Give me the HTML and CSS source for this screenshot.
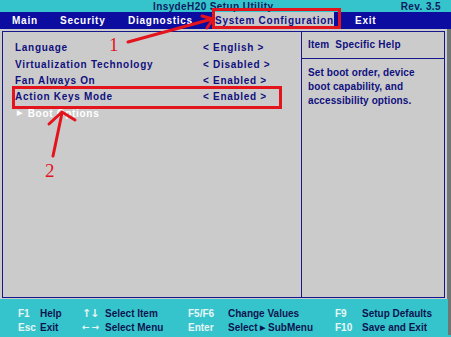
FILE: index.html
```html
<!DOCTYPE html>
<html lang="en">
<head>
    <meta charset="UTF-8">
    <meta name="viewport" content="width=device-width, initial-scale=1.0">
    <title>InsydeH20 Setup Utility</title>
    <link rel="stylesheet" href="styles.css">
</head>
<body>
    <div class="screen">
        <div class="titlebar">
            <span class="title">InsydeH20 Setup Utility</span>
            <span class="rev">Rev. 3.5</span>
        </div>
        <div class="menu">
            <span class="tab">Main</span>
            <span class="tab">Security</span>
            <span class="tab">Diagnostics</span>
            <span class="tab"><span class="selected">System Configuration</span></span>
            <span class="tab">Exit</span>
        </div>
        <div class="main">
            <div class="frame">
                <div class="items">
                    <div class="row r1"><span class="label">Language</span><span class="value">&lt; English &gt;</span></div>
                    <div class="row r2"><span class="label">Virtualization Technology</span><span class="value">&lt; Disabled &gt;</span></div>
                    <div class="row r3"><span class="label">Fan Always On</span><span class="value">&lt; Enabled &gt;</span></div>
                    <div class="row r4"><span class="label">Action Keys Mode</span><span class="value">&lt; Enabled &gt;</span></div>
                    <div class="row submenu"><span class="tri">&#9654;</span>Boot Options</div>
                </div>
                <div class="help">
                    <div class="help-head">Item&nbsp; Specific Help</div>
                    <div class="help-text">Set boot order, device<br>boot capability, and<br>accessibility options.</div>
                </div>
            </div>
        </div>
        <div class="footer">
            <span class="key">F1</span><span class="desc">Help</span>
            <span class="key arrow">&uarr;&darr;</span><span class="desc">Select Item</span>
            <span class="key">F5/F6</span><span class="desc">Change Values</span>
            <span class="key">F9</span><span class="desc">Setup Defaults</span>
            <span class="key">Esc</span><span class="desc">Exit</span>
            <span class="key arrow-h">&larr;&rarr;</span><span class="desc">Select Menu</span>
            <span class="key">Enter</span><span class="desc">Select <span class="small-tri">&#9654;</span> SubMenu</span>
            <span class="key">F10</span><span class="desc">Save and Exit</span>
        </div>

        <!-- annotations drawn on top of the screenshot -->
        <div class="mark mark-tab"></div>
        <div class="mark mark-row"></div>
        <span class="num num-1">1</span>
        <span class="num num-2">2</span>
        <svg class="arrows" width="451" height="337" viewBox="0 0 451 337">
            <g fill="none" stroke="#e4141c" stroke-width="3" stroke-linecap="round">
                <path d="M128 42 L212 19"/>
                <path d="M202 16 L213 19 L207 28"/>
                <path d="M53 156 L62 113"/>
                <path d="M49 124 L62 112 L75 120"/>
            </g>
        </svg>
    </div>
</body>
</html>
```

FILE: styles.css
```css
body { margin: 0; background: #ffffff; }
.screen { position: relative; width: 451px; height: 337px; overflow: hidden; background: #36c4cc; font-family: "Liberation Sans", Arial, sans-serif; font-weight: bold; }

.titlebar { height: 12px; display: flex; align-items: flex-end; color: #0c1a60; font-size: 10px; line-height: 10px; }
.title { margin-left: 153px; letter-spacing: 0.4px; }
.rev { margin-left: auto; margin-right: 10px; letter-spacing: 0.4px; }

.menu { height: 17px; background: #0c0ca0; display: grid; grid-template-columns: 48px 68px 87px 140px auto; padding-left: 12px; align-items: center; color: #ffffff; font-size: 10px; letter-spacing: 0.75px; }
.tab { white-space: nowrap; }
.tab .selected { display: block; width: 119px; margin-left: -3px; padding-left: 3px; line-height: 17px; background: #c8c8c8; color: #10108a; }

.main { height: 270px; background: #cbcbcb; padding: 2px 2px 1px 2px; box-sizing: border-box; border-right: 4px solid #6f7674; }
.frame { height: 100%; border: 1px solid #16168e; display: flex; box-sizing: border-box; }
.items { width: 298px; padding: 8px 0 0 12px; box-sizing: border-box; color: #10107e; font-size: 10px; letter-spacing: 0.7px; }
.row { height: 16px; display: flex; align-items: center; white-space: nowrap; }
.r1 { height: 15px; }
.r2 { height: 18px; }
.r3 { height: 15px; }
.r4 { height: 17px; }
.label { width: 188px; }
.submenu { color: #ffffff; }
.tri { font-size: 7px; margin-left: 2px; margin-right: 5px; }

.help { flex: 1; border-left: 1px solid #16168e; color: #10107e; font-size: 10px; }
.help-head { height: 26px; border-bottom: 1px solid #16168e; padding-left: 6px; line-height: 26px; letter-spacing: 0.2px; }
.help-text { padding: 7px 0 0 6px; line-height: 14px; letter-spacing: 0.1px; }

.footer { display: grid; grid-template-columns: 22px 42px 23px 83px 40px 107px 27px auto; grid-auto-rows: 14px; padding: 7px 0 0 18px; align-items: center; font-size: 10px; white-space: nowrap; border-right: 3px solid #6f7674; height: 36px; box-sizing: border-box; }
.key { color: #e6f6f6; }
.key.arrow { font-family: "DejaVu Sans", sans-serif; font-size: 11px; letter-spacing: -1px; }
.key.arrow-h { font-family: "DejaVu Sans", sans-serif; font-size: 9px; letter-spacing: 2px; }
.desc { color: #0c1450; }
.small-tri { font-size: 7px; vertical-align: 1px; }

.mark { position: absolute; border: 3px solid #e4141c; box-sizing: border-box; }
.mark-tab { left: 212px; top: 8px; width: 129px; height: 21px; }
.mark-row { left: 12px; top: 86px; width: 270px; height: 23px; }
.num { position: absolute; color: #e4141c; font-family: "Liberation Serif", "Times New Roman", serif; font-weight: normal; font-size: 19px; line-height: 19px; }
.num-1 { left: 109px; top: 35px; }
.num-2 { left: 45px; top: 161px; }
.arrows { position: absolute; left: 0; top: 0; pointer-events: none; }
```
